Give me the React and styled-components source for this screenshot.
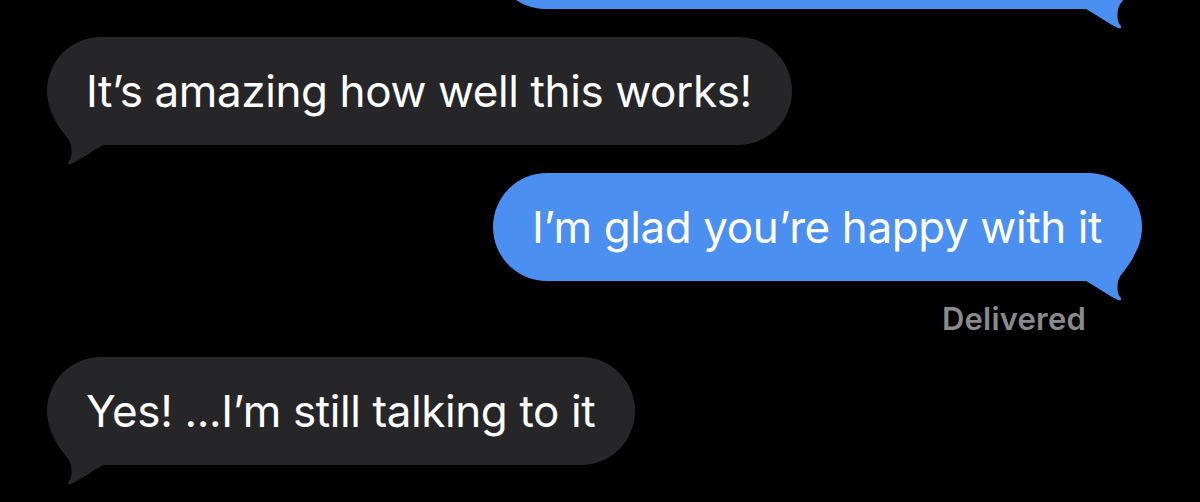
import React from "react";
import styled, { createGlobalStyle } from "styled-components";

const GlobalStyle = createGlobalStyle`
  html, body {
    margin: 0;
    padding: 0;
    background: #000;
    overflow: hidden;
  }
  body {
    font-family: Inter, "Noto Sans", "Liberation Sans", sans-serif;
    -webkit-font-smoothing: antialiased;
  }
`

const Thread = styled.div`
  display: flex;
  flex-direction: column;
  padding: 0 58px 0 47px;
  height: 502px;
  box-sizing: border-box;
`

const Row = styled.div`
  display: flex;
  justify-content: ${(p) => (p.$mine ? "flex-end" : "flex-start")};
  margin-top: ${(p) => p.$gap}px;
`

const Bubble = styled.div`
  position: relative;
  box-sizing: border-box;
  height: 108px;
  padding: 0 40px 0 39px;
  display: flex;
  align-items: center;
  border-radius: 54px;
  background: ${(p) => (p.$mine ? "#4b8ff0" : "#262629")};
  color: #fff;
  font-size: 44px;
  font-weight: 400;
  letter-spacing: -0.4px;
  white-space: nowrap;
  z-index: 1;
`

// the one scrolled up past the top edge, only its lower rim shows
const CutBubble = styled(Bubble)`
  width: 650px;
`

const TailSvg = styled.svg`
  position: absolute;
  top: 0;
  ${(p) => (p.$mine ? "right: 0;" : "left: 0;")}
  width: 60px;
  height: 130px;
  transform: ${(p) => (p.$mine ? "scaleX(-1)" : "none")};
  z-index: -1;
  overflow: visible;
`

const Receipt = styled.div`
  align-self: flex-end;
  margin: 20px 56px 0 0;
  font-size: 31px;
  line-height: 36px;
  font-weight: 600;
  letter-spacing: 0.2px;
  color: #8a8a8e;
`

const Tail = ({ mine }) => (
  <TailSvg $mine={mine} viewBox="0 0 60 130">
    <path
      d="M 8 83 C 14 95, 22 101, 24 108 C 25 115, 25 121, 21 125 Q 20 128, 24 127 C 33 123, 42 116, 56 108 L 60 108 L 60 80 Z"
      fill={mine ? "#4b8ff0" : "#262629"}
    />
  </TailSvg>
)

const Message = ({ mine, gap, children }) => (
  <Row $mine={mine} $gap={gap}>
    <Bubble $mine={mine}>
      {children}
      <Tail mine={mine} />
    </Bubble>
  </Row>
)

const App = () => {
  return (
    <>
      <GlobalStyle />
      <Thread>
        <Row $mine $gap={-99}>
          <CutBubble $mine>
            <Tail mine />
          </CutBubble>
        </Row>
        <Message gap={28}>It’s amazing how well this works!</Message>
        <Message mine gap={28}>I’m glad you’re happy with it</Message>
        <Receipt>Delivered</Receipt>
        <Message gap={20}>Yes! ...I’m still talking to it</Message>
      </Thread>
    </>
  );
};

export default App;
